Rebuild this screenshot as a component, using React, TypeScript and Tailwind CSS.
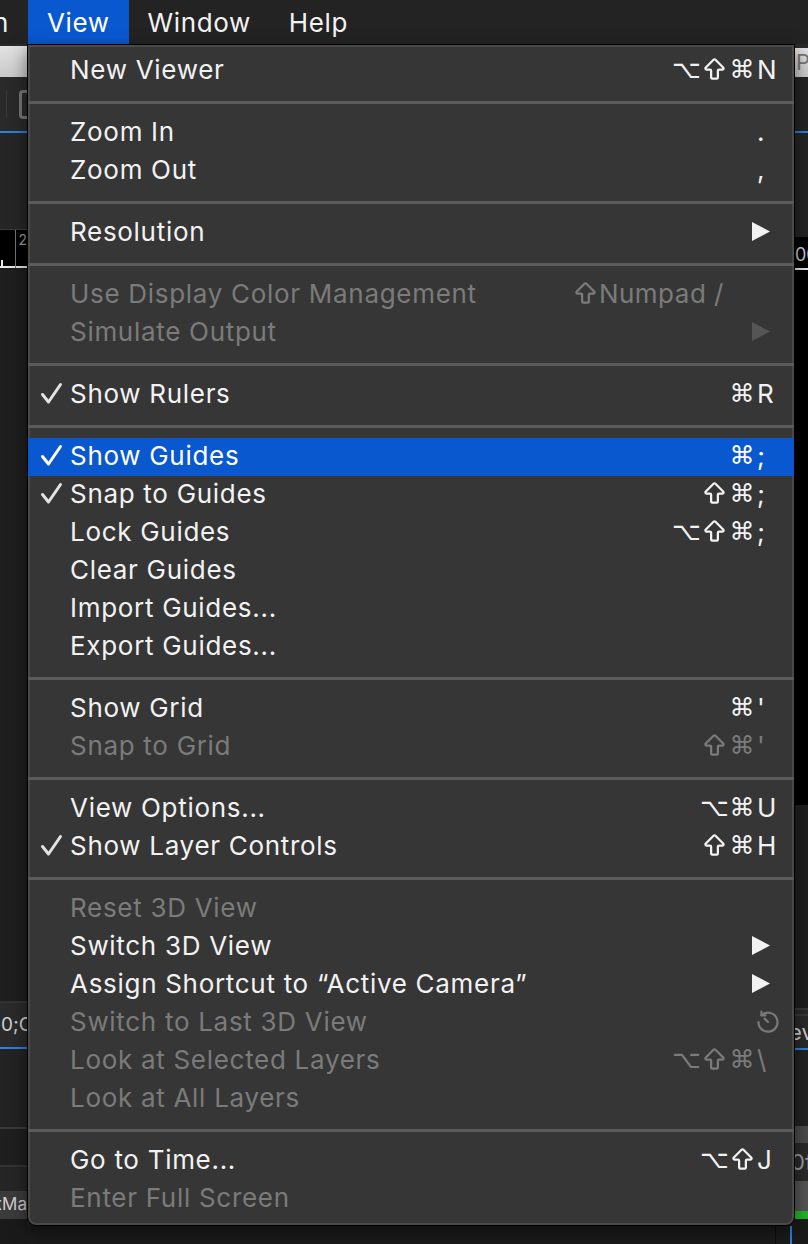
import React from "react";
import { ArrowBigUp } from "lucide-react";

type Item = {
  label: string;
  check?: boolean;
  disabled?: boolean;
  active?: boolean;
  mods?: string;
  keyChar?: string;
  right?: string;
  arrow?: boolean;
  restore?: boolean;
};

const SEP = "sep" as const;

const menu: (Item | typeof SEP)[] = [
  { label: "New Viewer", mods: "⌥⇧⌘", keyChar: "N" },
  SEP,
  { label: "Zoom In", keyChar: "." },
  { label: "Zoom Out", keyChar: "," },
  SEP,
  { label: "Resolution", arrow: true },
  SEP,
  { label: "Use Display Color Management", disabled: true, right: "Numpad /" },
  { label: "Simulate Output", disabled: true, arrow: true },
  SEP,
  { label: "Show Rulers", check: true, mods: "⌘", keyChar: "R" },
  SEP,
  { label: "Show Guides", check: true, active: true, mods: "⌘", keyChar: ";" },
  { label: "Snap to Guides", check: true, mods: "⇧⌘", keyChar: ";" },
  { label: "Lock Guides", mods: "⌥⇧⌘", keyChar: ";" },
  { label: "Clear Guides" },
  { label: "Import Guides..." },
  { label: "Export Guides..." },
  SEP,
  { label: "Show Grid", mods: "⌘", keyChar: "'" },
  { label: "Snap to Grid", disabled: true, mods: "⇧⌘", keyChar: "'" },
  SEP,
  { label: "View Options...", mods: "⌥⌘", keyChar: "U" },
  { label: "Show Layer Controls", check: true, mods: "⇧⌘", keyChar: "H" },
  SEP,
  { label: "Reset 3D View", disabled: true },
  { label: "Switch 3D View", arrow: true },
  { label: "Assign Shortcut to “Active Camera”", arrow: true },
  { label: "Switch to Last 3D View", disabled: true, restore: true },
  { label: "Look at Selected Layers", disabled: true, mods: "⌥⇧⌘", keyChar: "\\" },
  { label: "Look at All Layers", disabled: true },
  SEP,
  { label: "Go to Time...", mods: "⌥⇧", keyChar: "J" },
  { label: "Enter Full Screen", disabled: true },
];

const sans = "font-['Inter','Noto_Sans',sans-serif]";
const glyph = "font-['DejaVu_Sans',sans-serif]";

function Check({ color }: { color: string }) {
  return (
    <svg width="23" height="23" viewBox="0 0 23 23" fill="none">
      <path d="M2.5 12.5 L8.5 20 L20.5 2.5" stroke={color} strokeWidth="3" strokeLinecap="round" strokeLinejoin="round" />
    </svg>
  );
}

function Arrow({ color }: { color: string }) {
  return (
    <svg width="18" height="19" viewBox="0 0 18 19" className="mr-[10px]">
      <path d="M0 0 L18 9.5 L0 19 Z" fill={color} />
    </svg>
  );
}

function Restore() {
  return (
    <svg width="24" height="24" viewBox="0 0 24 24" fill="none" stroke="#7a7a7a" strokeWidth="2.2" strokeLinecap="round" strokeLinejoin="round">
      <path d="M5.5 5.2 A9.5 9.5 0 1 1 2.5 12" />
      <path d="M5.5 1.5 V5.4 H9.4" />
      <path d="M12 12 L8.6 8.6" />
    </svg>
  );
}

function Mod({ m }: { m: string }) {
  if (m === "⇧") {
    return (
      <span className="flex w-[28px] justify-center">
        <ArrowBigUp size={27} strokeWidth={2} />
      </span>
    );
  }
  return <span className={`w-[28px] text-center text-[25px] ${glyph}`}>{m}</span>;
}

function Row({ item }: { item: Item }) {
  const text = item.active ? "text-white" : item.disabled ? "text-[#7b7b7b]" : "text-[#f2f2f2]";
  return (
    <div className={`flex h-[38px] items-center pr-[14px] pb-[3px] ${item.active ? "bg-[#0a58d0]" : ""} ${text}`}>
      <div className="flex w-[42px] shrink-0 items-center pl-[12px]">
        {item.check && <Check color={item.active ? "#ffffff" : "#e4e4e4"} />}
      </div>
      <div className="flex-1 whitespace-nowrap tracking-[0.7px]">{item.label}</div>
      {item.keyChar && (
        <div className="flex items-center">
          <div className="flex items-center">
            {(item.mods ?? "").split("").map((m, i) => (
              <Mod key={i} m={m} />
            ))}
          </div>
          <span className="w-[24px] pl-[1px]">{item.keyChar}</span>
        </div>
      )}
      {item.right && (
        <div className="mr-[56px] flex items-center">
          <ArrowBigUp size={27} strokeWidth={2} />
          <span className="tracking-[0.5px]">{item.right}</span>
        </div>
      )}
      {item.arrow && <Arrow color={item.disabled ? "#555555" : "#f2f2f2"} />}
      {item.restore && <Restore />}
    </div>
  );
}

function LeftStrip() {
  return (
    <div className="flex w-[27px] shrink-0 flex-col overflow-hidden">
      <div className="h-[2px] bg-[#2a2a2a]" />
      <div className="h-[31px] bg-gradient-to-b from-[#e2e2e2] to-[#c9c9c9]" />
      <div className="flex h-[54px] items-center justify-between bg-[#2a2a2a] pl-[6px]">
        <div className="h-[28px] w-[1px] bg-[#3a3a3a]" />
        <div className="h-[29px] w-[8px] rounded-l-[4px] border-y-[3px] border-l-[3px] border-[#777777]" />
      </div>
      <div className="h-[2px] bg-[#2f80d8]" />
      <div className="h-[96px] bg-[#262626]" />
      <div className="h-[1px] bg-[#3c3c3c]" />
      <div className="flex h-[38px] items-start justify-end border-b-[2px] border-[#e8e8e8] bg-black">
        <div className="mt-[30px] mr-[12px] h-[6px] w-[2px] bg-[#e8e8e8]" />
        <div className="h-[38px] w-[1px] bg-[#777]" />
        <span className={`ml-[2px] text-[14px] leading-[20px] text-[#999] ${sans}`}>2</span>
      </div>
      <div className="h-[733px] bg-[#1e1e1e]" />
      <div className="h-[2px] bg-[#333]" />
      <div className="flex h-[44px] items-center overflow-hidden bg-[#2b2b2b] pl-[1px]">
        <span className={`whitespace-nowrap text-[19px] text-[#cfcfcf] ${sans}`}>0;C</span>
      </div>
      <div className="h-[2px] bg-[#2f80d8]" />
      <div className="h-[78px] bg-[#232323]" />
      <div className="h-[2px] bg-[#3a3a3a]" />
      <div className="h-[36px] bg-[#1f1f1f]" />
      <div className="h-[2px] bg-[#333]" />
      <div className="h-[24px] bg-[#262626]" />
      <div className="flex h-[28px] items-center justify-end overflow-hidden bg-[#3b3b3b]">
        <span className={`whitespace-nowrap text-[17px] text-[#cfcfcf] ${sans}`}>xMa</span>
      </div>
      <div className="flex-1 bg-[#1a1a1a]" />
    </div>
  );
}

function RightStrip() {
  return (
    <div className="flex w-[13px] shrink-0 flex-col overflow-hidden">
      <div className="h-[4px] bg-[#2a2a2a]" />
      <div className="flex h-[29px] items-center overflow-hidden bg-gradient-to-b from-[#e2e2e2] to-[#c9c9c9] pl-[1px]">
        <span className={`text-[22px] text-[#777] ${sans}`}>P</span>
      </div>
      <div className="h-[54px] bg-[#242424]" />
      <div className="h-[2px] bg-[#2f80d8]" />
      <div className="h-[104px] bg-[#242424]" />
      <div className="flex h-[33px] items-end overflow-hidden border-b-[2px] border-[#e8e8e8] bg-black">
        <span className={`text-[18px] leading-[26px] text-[#ccc] ${sans}`}>00</span>
      </div>
      <div className="h-[535px] bg-black" />
      <div className="h-[203px] bg-[#1f1f1f]" />
      <div className="h-[8px] border-y-[2px] border-[#3a3a3a] bg-[#2b2b2b]" />
      <div className="flex h-[32px] items-center overflow-hidden bg-[#2a2a2a]">
        <span className={`-ml-[6px] text-[22px] text-[#cfcfcf] ${sans}`}>ev</span>
      </div>
      <div className="h-[2px] bg-[#2f80d8]" />
      <div className="h-[76px] bg-[#232323]" />
      <div className="h-[17px] bg-[#4b4b4b]" />
      <div className="flex h-[38px] items-center overflow-hidden bg-[#2a2a2a]">
        <span className={`-ml-[4px] text-[22px] text-[#9a9a9a] ${sans}`}>0f</span>
      </div>
      <div className="h-[30px] bg-[#555]" />
      <div className="h-[8px] bg-[#22b52a]" />
      <div className="flex-1 bg-[#1a1a1a]" />
    </div>
  );
}

export default function App() {
  return (
    <div className={`relative h-[1244px] w-[808px] overflow-hidden bg-[#1e1e1e] text-[26px] ${sans}`}>
      <div className="flex h-[44px] items-center bg-[#232323] text-[26px] tracking-[0.6px] text-[#f2f2f2]">
        <div className="flex h-full w-[28px] items-center justify-end overflow-hidden pr-[19px]">
          <span className="whitespace-nowrap">Composition</span>
        </div>
        <div className="flex h-[44px] items-center bg-[#0a58d0] px-[19px] text-white">View</div>
        <div className="flex h-full items-center px-[19px]">Window</div>
        <div className="flex h-full items-center px-[19px]">Help</div>
      </div>

      <div className="flex h-[1200px]">
        <LeftStrip />
        <div className="flex flex-1 flex-col">
          <div className="flex-1 bg-[#1e1e1e]" />
          <div className="flex h-[18px] justify-end bg-[#1b1b1b]">
            <div className="mr-[14px] w-[1px] bg-[#0e0e0e]" />
            <div className="mr-[3px] w-[2px] bg-[#2f80d8]" />
          </div>
        </div>
        <RightStrip />
      </div>

      <div className="absolute left-[27px] top-[44px] w-[768px] rounded-b-[9px] border border-black bg-[#363636] pt-[7px] pb-[7px] shadow-[inset_0_0_0_2px_#4a4a4a,0_6px_18px_rgba(0,0,0,0.5)]">
        {menu.map((item, i) =>
          item === SEP ? (
            <div key={i} className="h-[24px] pt-[11px]">
              <div className="h-[3px] bg-[#5b5b5b]" />
            </div>
          ) : (
            <Row key={i} item={item} />
          )
        )}
      </div>
    </div>
  );
}
